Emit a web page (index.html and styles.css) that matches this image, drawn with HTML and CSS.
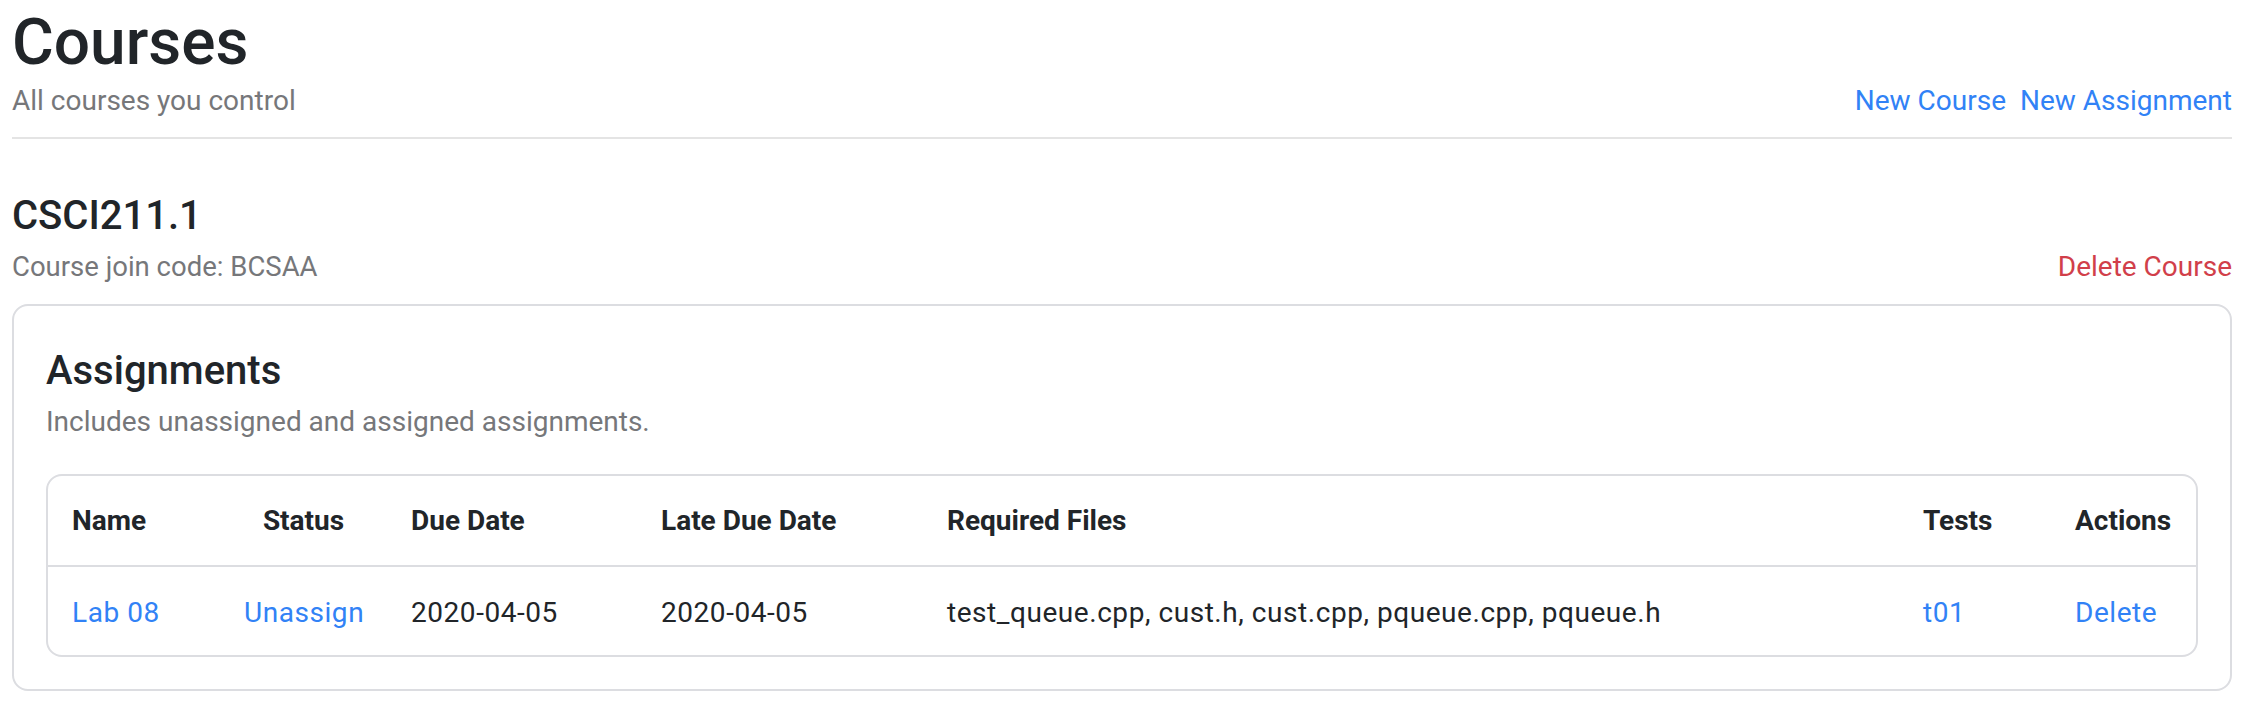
FILE: index.html
```html
<!DOCTYPE html>
<html lang="en">
<head>
<meta charset="utf-8">
<title>Courses</title>
<link rel="stylesheet" href="styles.css">
</head>
<body>
<div class="page">
  <header class="page-head">
    <div class="titles">
      <h1 class="page-title">Courses</h1>
      <p class="muted subtitle">All courses you control</p>
    </div>
    <nav class="head-links">
      <a class="link" href="#">New Course</a>
      <a class="link" href="#">New Assignment</a>
    </nav>
  </header>

  <section class="course">
    <h2 class="course-title">CSCI211.1</h2>
    <div class="course-meta">
      <span class="muted join-code">Course join code: BCSAA</span>
      <a class="link danger" href="#">Delete Course</a>
    </div>

    <div class="card">
      <h3 class="card-title">Assignments</h3>
      <p class="muted card-sub">Includes unassigned and assigned assignments.</p>
      <div class="table-wrap">
        <table class="table">
          <colgroup>
            <col class="c-name">
            <col class="c-status">
            <col class="c-due">
            <col class="c-late">
            <col class="c-files">
            <col class="c-tests">
            <col class="c-actions">
          </colgroup>
          <thead>
            <tr>
              <th>Name</th>
              <th class="center">Status</th>
              <th>Due Date</th>
              <th>Late Due Date</th>
              <th>Required Files</th>
              <th>Tests</th>
              <th>Actions</th>
            </tr>
          </thead>
          <tbody>
            <tr>
              <td><a class="link" href="#">Lab 08</a></td>
              <td class="center"><a class="link" href="#">Unassign</a></td>
              <td>2020-04-05</td>
              <td>2020-04-05</td>
              <td>test_queue.cpp, cust.h, cust.cpp, pqueue.cpp, pqueue.h</td>
              <td><a class="link" href="#">t01</a></td>
              <td><a class="link" href="#">Delete</a></td>
            </tr>
          </tbody>
        </table>
      </div>
    </div>
  </section>
</div>
</body>
</html>
```

FILE: styles.css
```css
* { box-sizing: border-box; }

html, body {
  margin: 0;
  padding: 0;
  background: #ffffff;
}

body {
  font-family: Roboto, "Liberation Sans", Arial, sans-serif;
  font-size: 28px;
  line-height: 1.2;
  color: #212529;
}

.page {
  padding: 5px 22px 0 12px;
}

.page-head {
  display: flex;
  justify-content: space-between;
  align-items: flex-end;
  padding-bottom: 20px;
  border-bottom: 2px solid #e4e4e4;
}

.page-title {
  margin: 0;
  font-size: 64px;
  font-weight: 500;
  line-height: 1.2;
}

.subtitle {
  margin: 2px 0 0;
}

.muted {
  color: #76777a;
}

.join-code {
  font-size: 27.5px;
}

.head-links {
  display: flex;
  gap: 14px;
}

.link {
  color: #3182f6;
  text-decoration: none;
}

.danger {
  color: #d13f4a;
}

.course {
  margin-top: 53px;
}

.course-title {
  margin: 0;
  font-size: 40px;
  font-weight: 500;
  line-height: 1.2;
}

.course-meta {
  display: flex;
  justify-content: space-between;
  align-items: baseline;
  margin-top: 10px;
}

.card {
  margin-top: 20px;
  border: 2px solid #dcdde1;
  border-radius: 16px;
  padding: 41px 32px 32px;
}

.card-title {
  margin: 0;
  font-size: 40px;
  font-weight: 500;
  line-height: 1.2;
}

.card-sub {
  margin: 10px 0 0;
}

.table-wrap {
  margin-top: 35px;
  border: 2px solid #dcdde1;
  border-radius: 16px;
  overflow: hidden;
}

.table {
  width: 100%;
  border-collapse: collapse;
  table-layout: fixed;
}

.c-name { width: 172px; }
.c-status { width: 167px; }
.c-due { width: 250px; }
.c-late { width: 286px; }
.c-tests { width: 152px; }
.c-actions { width: 145px; }

.table th,
.table td {
  padding: 28px 24px 28px;
  text-align: left;
  white-space: nowrap;
}

.table th {
  font-weight: 700;
  border-bottom: 2px solid #dcdde1;
}

.table td {
  padding-top: 29px;
  padding-bottom: 25px;
  letter-spacing: 0.55px;
}

.table .center {
  text-align: center;
}
```
